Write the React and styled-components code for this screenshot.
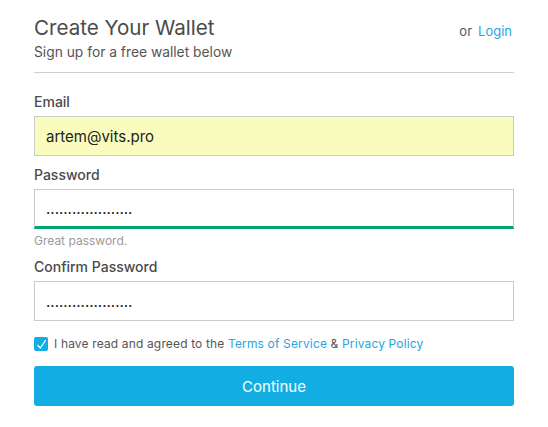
import React from "react";
import styled, { createGlobalStyle } from "styled-components";

const Global = createGlobalStyle`
  html, body { margin: 0; padding: 0; background: #fff; }
  body { font-family: Inter, "Open Sans", Arial, sans-serif; color: #4a4a4a; }
  * { box-sizing: border-box; }
`;

const Page = styled.div`
  width: 548px;
  padding: 15px 34px 0 34px;
`;

const Header = styled.div`
  display: flex;
  justify-content: space-between;
  align-items: flex-start;
  padding-bottom: 11px;
  border-bottom: 1px solid #cfcfcf;
`;

const TitleBlock = styled.div`
  display: flex;
  flex-direction: column;
`;

const Title = styled.h1`
  margin: 0;
  font-size: 20.6px;
  line-height: 26px;
  font-weight: 400;
  color: #4a4a4a;
`;

const Subtitle = styled.div`
  margin-top: 2px;
  font-size: 13.8px;
  line-height: 18px;
  color: #555;
`;

const LoginHint = styled.div`
  font-size: 13px;
  line-height: 18px;
  margin-top: 7px;
  margin-right: 2px;
  color: #555;
  display: flex;
  gap: 6px;
`;

const Link = styled.a`
  color: #27a6e0;
  text-decoration: none;
`;

const Form = styled.form`
  display: flex;
  flex-direction: column;
  padding-top: 20px;
`;

const Field = styled.div`
  display: flex;
  flex-direction: column;
  margin-bottom: ${(p) => p.$gap}px;
`;

const Label = styled.label`
  font-size: 14px;
  line-height: 17px;
  font-weight: 500;
  color: #4a4a4a;
  margin-bottom: 6px;
`;

const Input = styled.input`
  width: 100%;
  height: 40px;
  padding: 0 11px;
  font-family: inherit;
  font-size: 15px;
  color: #222;
  background: ${(p) => (p.$autofill ? "#fafcbd" : "#fff")};
  border: 1px solid #cbcbcb;
  border-bottom: ${(p) => (p.$strong ? "3px solid #00a86e" : "1px solid #cbcbcb")};
  border-radius: 0;
  outline: none;
`;

const Hint = styled.div`
  font-size: 12px;
  line-height: 14px;
  color: #9a9a9a;
  margin-top: 5px;
`;

const AgreeRow = styled.div`
  display: flex;
  align-items: center;
  gap: 6px;
  font-size: 12px;
  line-height: 14px;
  letter-spacing: 0.15px;
  color: #555;
  margin-top: 16px;
  margin-bottom: 15px;
`;

const Check = styled.span`
  width: 14px;
  height: 14px;
  border-radius: 2px;
  background: #12aee3;
  display: inline-flex;
  align-items: center;
  justify-content: center;
  flex: none;
`;

const Button = styled.button`
  width: 100%;
  height: 40px;
  border: none;
  border-radius: 3px;
  background: #12aee3;
  color: #fff;
  font-family: inherit;
  font-size: 15px;
`;

const DOTS = "....................";

export default function App() {
  return (
    <>
      <Global />
      <Page>
        <Header>
          <TitleBlock>
            <Title>Create Your Wallet</Title>
            <Subtitle>Sign up for a free wallet below</Subtitle>
          </TitleBlock>
          <LoginHint>
            <span>or</span>
            <Link href="#">Login</Link>
          </LoginHint>
        </Header>
        <Form onSubmit={(e) => e.preventDefault()}>
          <Field $gap={10}>
            <Label>Email</Label>
            <Input $autofill defaultValue="artem@vits.pro" readOnly />
          </Field>
          <Field $gap={10}>
            <Label>Password</Label>
            <Input $strong defaultValue={DOTS} readOnly />
            <Hint>Great password.</Hint>
          </Field>
          <Field $gap={0}>
            <Label>Confirm Password</Label>
            <Input defaultValue={DOTS} readOnly />
          </Field>
          <AgreeRow>
            <Check>
              <svg width="11" height="11" viewBox="0 0 11 11">
                <path d="M1.5 6 L4.2 9 L9.8 1.2" fill="none" stroke="#fff" strokeWidth="1.2" />
              </svg>
            </Check>
            <span>
              I have read and agreed to the <Link href="#">Terms of Service</Link> &amp;{" "}
              <Link href="#">Privacy Policy</Link>
            </span>
          </AgreeRow>
          <Button type="button">Continue</Button>
        </Form>
      </Page>
    </>
  );
}
